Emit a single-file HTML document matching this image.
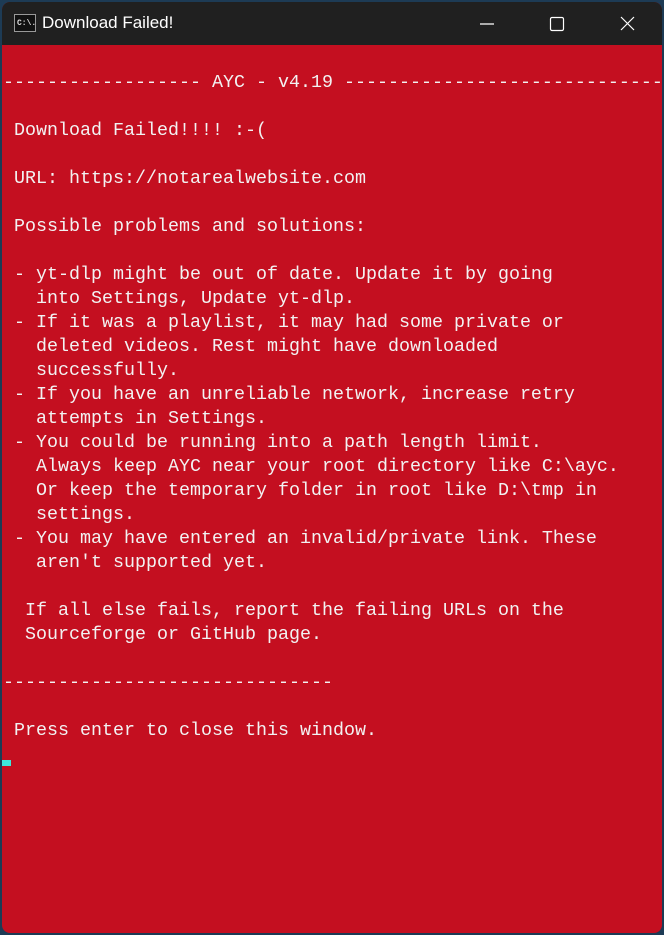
<!DOCTYPE html>
<html><head><style>
html,body{margin:0;padding:0;width:664px;height:935px;overflow:hidden;background:#1d3b55;}
.win{position:absolute;left:2px;top:2px;width:660px;height:931px;border-radius:8px;overflow:hidden;background:#c40f20;}
.tb{position:absolute;left:0;top:0;width:660px;height:43px;background:#202020;color:#fff;font-family:"Liberation Sans",sans-serif;font-size:17px;}
.tb .t{position:absolute;left:40px;top:11px;}
.ico{position:absolute;left:12px;top:12px;width:22px;height:18px;background:#111;border:1px solid #999;box-sizing:border-box;}
.ico span{position:absolute;left:2px;top:4px;font:bold 8px "Liberation Mono",monospace;color:#ddd;}
.con{position:absolute;left:1px;top:45px;margin:0;font-family:"Liberation Mono",monospace;font-size:18.33px;line-height:24px;color:#f2f2f2;white-space:pre;}
.cur{position:absolute;left:0;top:758px;width:9px;height:6px;background:#3de8dc;}
</style></head><body>
<div class="win">
<div class="tb"><div class="ico"><span>C:\.</span></div><div class="t">Download Failed!</div>
<svg style="position:absolute;left:470px;top:12px" width="180" height="20">
<line x1="8" y1="10" x2="22" y2="10" stroke="#fff" stroke-width="1.2"/>
<rect x="78.5" y="3.5" width="13" height="13" rx="1.5" fill="none" stroke="#fff" stroke-width="1.2"/>
<path d="M149 3 L162 16 M162 3 L149 16" stroke="#fff" stroke-width="1.2"/>
</svg></div>
<pre class="con">

------------------ AYC - v4.19 ------------------------------

 Download Failed!!!! :-(

 URL: https://notarealwebsite.com

 Possible problems and solutions:

 - yt-dlp might be out of date. Update it by going
   into Settings, Update yt-dlp.
 - If it was a playlist, it may had some private or
   deleted videos. Rest might have downloaded
   successfully.
 - If you have an unreliable network, increase retry
   attempts in Settings.
 - You could be running into a path length limit.
   Always keep AYC near your root directory like C:\ayc.
   Or keep the temporary folder in root like D:\tmp in
   settings.
 - You may have entered an invalid/private link. These
   aren't supported yet.

  If all else fails, report the failing URLs on the
  Sourceforge or GitHub page.

------------------------------

 Press enter to close this window.
</pre>
<div class="cur"></div>
</div>
</body></html>
